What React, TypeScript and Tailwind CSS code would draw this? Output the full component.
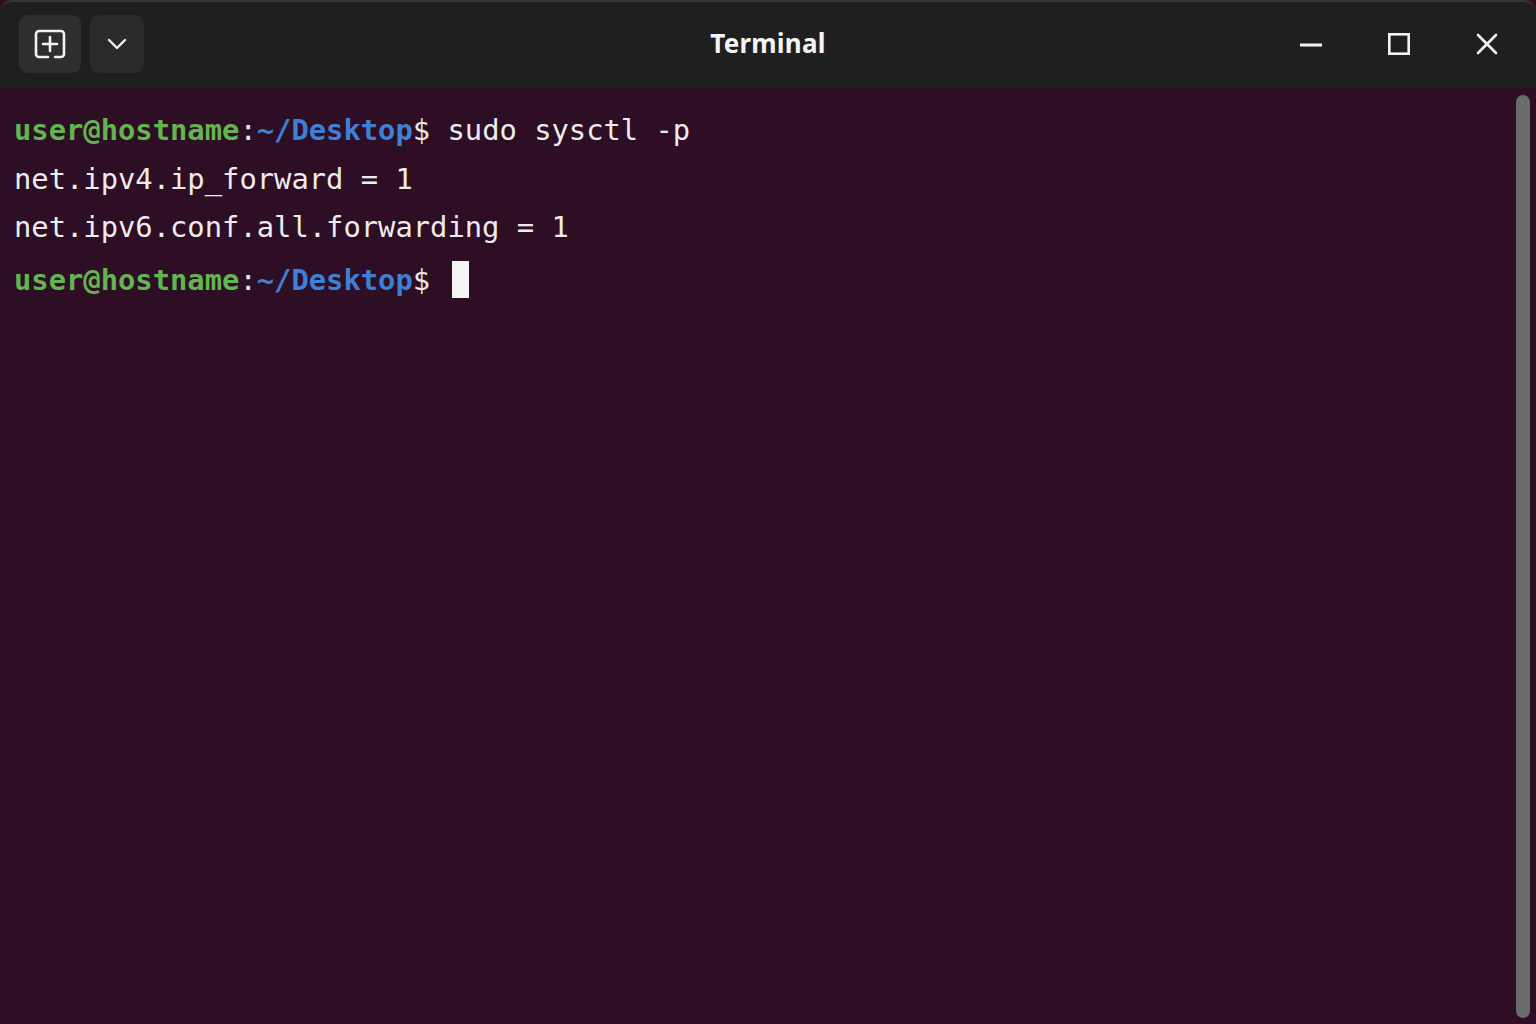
import React from 'react';

const mono = { fontFamily: '"DejaVu Sans Mono", "Liberation Mono", monospace' };

const Prompt: React.FC = () => (
  <>
    <span className="text-[#62b54f] font-bold">user@hostname</span>
    <span className="text-[#e8e8e8]">:</span>
    <span className="text-[#3d80d6] font-bold">~/Desktop</span>
    <span className="text-[#e8e8e8]">$ </span>
  </>
);

const App: React.FC = () => {
  return (
    <div className="h-screen w-full flex flex-col bg-[#2d0e24] overflow-hidden">
      {/* header bar */}
      <div className="h-[88px] shrink-0 grid grid-cols-[1fr_auto_1fr] items-center pb-[3px] bg-[#1f1f1f] rounded-t-[12px] border-t-2 border-[#363636]">
        <div className="flex items-center gap-[9px] pl-[19px]">
          <button className="w-[62px] h-[58px] rounded-[9px] bg-[#2e2e2e] flex items-center justify-center">
            <svg width="32" height="30" viewBox="0 0 32 30" fill="none" stroke="#f2f2f2" strokeWidth="2.6" strokeLinecap="round" strokeLinejoin="round">
              <path d="M14 28H5a3 3 0 0 1-3-3V5a3 3 0 0 1 3-3h22a3 3 0 0 1 3 3v20a3 3 0 0 1-3 3h-6" />
              <path d="M16 8v14M9 15h14" />
            </svg>
          </button>
          <button className="w-[54px] h-[58px] rounded-[9px] bg-[#2a2a2a] flex items-center justify-center">
            <svg width="20" height="12" viewBox="0 0 20 12" fill="none" stroke="#f2f2f2" strokeWidth="2.4" strokeLinecap="round" strokeLinejoin="round">
              <path d="M2 2l8 8 8-8" />
            </svg>
          </button>
        </div>
        <div className="text-[26px] font-bold text-[#f4f4f4] tracking-[0.2px]" style={{ fontFamily: '"Noto Sans", "Open Sans", sans-serif' }}>
          Terminal
        </div>
        <div className="flex items-center justify-end gap-[66px] pr-[38px]">
          <svg width="22" height="22" viewBox="0 0 22 22" fill="none" stroke="#f2f2f2" strokeWidth="3">
            <path d="M0 12h22" />
          </svg>
          <svg width="22" height="22" viewBox="0 0 22 22" fill="none" stroke="#f2f2f2" strokeWidth="2.6">
            <rect x="1.3" y="1.3" width="19.4" height="19.4" />
          </svg>
          <svg width="22" height="22" viewBox="0 0 22 22" fill="none" stroke="#f2f2f2" strokeWidth="2.6" strokeLinecap="round">
            <path d="M2 2l18 18M20 2L2 20" />
          </svg>
        </div>
      </div>

      {/* terminal body */}
      <div className="flex-1 flex min-h-0">
        <div className="flex-1 pl-[14px] pt-[18px] text-[28.8px] leading-[48.5px] text-[#ececec] whitespace-pre" style={mono}>
          <div>
            <Prompt />
            <span>sudo sysctl -p</span>
          </div>
          <div>net.ipv4.ip_forward = 1</div>
          <div>net.ipv6.conf.all.forwarding = 1</div>
          <div className="mt-[4px] flex items-center">
            <span>
              <Prompt />
            </span>
            <span className="inline-block ml-[5px] w-[17px] h-[37px] bg-[#f4f4f4]" />
          </div>
        </div>
        <div className="w-[14px] mr-[6px] mt-[7px] mb-[6px] rounded-full bg-[#6b6b6b]" />
      </div>
    </div>
  );
};

export default App;
